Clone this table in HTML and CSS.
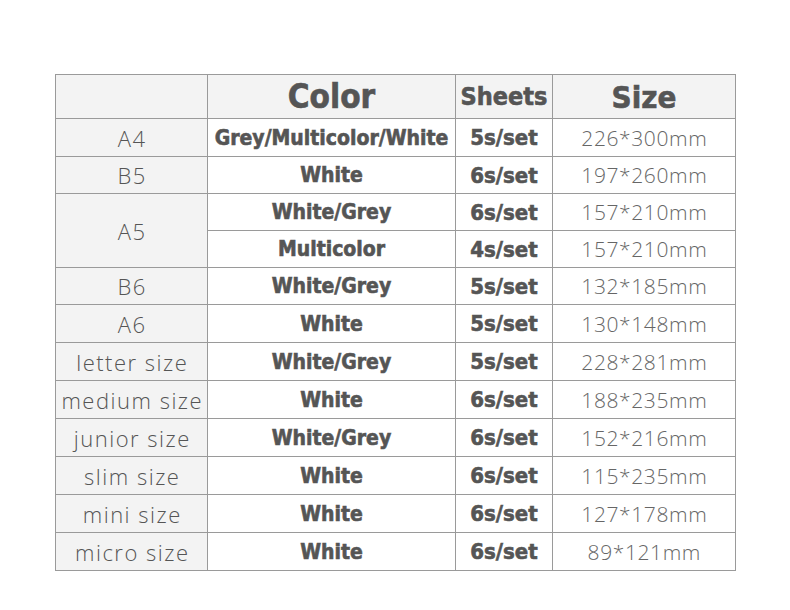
FILE: index.html
```html
<!DOCTYPE html>
<html>
<head>
<meta charset="utf-8">
<link rel="stylesheet" href="styles.css">
</head>
<body>
<div class="wrap">
<table class="spec">
  <colgroup>
    <col class="c1"><col class="c2"><col class="c3"><col class="c4">
  </colgroup>
  <thead>
    <tr class="head">
      <th class="name"></th>
      <th class="h-color">Color</th>
      <th class="h-sheets">Sheets</th>
      <th class="h-size">Size</th>
    </tr>
  </thead>
  <tbody>
    <tr class="r38"><td class="name">A4</td><td class="col">Grey/Multicolor/White</td><td class="sh">5s/set</td><td class="sz">226*300mm</td></tr>
    <tr class="r37"><td class="name">B5</td><td class="col">White</td><td class="sh">6s/set</td><td class="sz">197*260mm</td></tr>
    <tr class="r37"><td class="name" rowspan="2">A5</td><td class="col">White/Grey</td><td class="sh">6s/set</td><td class="sz">157*210mm</td></tr>
    <tr class="r37"><td class="col">Multicolor</td><td class="sh">4s/set</td><td class="sz">157*210mm</td></tr>
    <tr class="r37"><td class="name">B6</td><td class="col">White/Grey</td><td class="sh">5s/set</td><td class="sz">132*185mm</td></tr>
    <tr class="r38"><td class="name">A6</td><td class="col">White</td><td class="sh">5s/set</td><td class="sz">130*148mm</td></tr>
    <tr class="r38"><td class="name">letter size</td><td class="col">White/Grey</td><td class="sh">5s/set</td><td class="sz">228*281mm</td></tr>
    <tr class="r38"><td class="name">medium size</td><td class="col">White</td><td class="sh">6s/set</td><td class="sz">188*235mm</td></tr>
    <tr class="r38"><td class="name">junior size</td><td class="col">White/Grey</td><td class="sh">6s/set</td><td class="sz">152*216mm</td></tr>
    <tr class="r38"><td class="name">slim size</td><td class="col">White</td><td class="sh">6s/set</td><td class="sz">115*235mm</td></tr>
    <tr class="r38"><td class="name">mini size</td><td class="col">White</td><td class="sh">6s/set</td><td class="sz">127*178mm</td></tr>
    <tr class="r38"><td class="name">micro size</td><td class="col">White</td><td class="sh">6s/set</td><td class="sz">89*121mm</td></tr>
  </tbody>
</table>
</div>
</body>
</html>
```
FILE: styles.css
```css
html, body {
  margin: 0;
  padding: 0;
  background: #ffffff;
}
.wrap {
  padding: 74px 0 0 55px;
}
.spec {
  border-collapse: collapse;
  table-layout: fixed;
  width: 681px;
}
.c1 { width: 152px; }
.c2 { width: 248px; }
.c3 { width: 97px; }
.c4 { width: 183px; }
.spec th, .spec td {
  border: 1px solid #9a9a9a;
  padding: 0;
  text-align: center;
  vertical-align: middle;
  white-space: nowrap;
  overflow: hidden;
}
.head { height: 44px; }
.head th { background: #f3f3f3; }
.r38 { height: 38px; }
.r37 { height: 37px; }
.name {
  background: #f3f3f3;
  font-family: "Open Sans", sans-serif;
  font-weight: 300;
  font-size: 22px;
  letter-spacing: 1.5px;
  text-indent: 1.5px;
  color: #555555;
}
.sz {
  font-family: "Open Sans", sans-serif;
  font-weight: 300;
  font-size: 21px;
  letter-spacing: 0.6px;
  text-indent: 0.6px;
  color: #666666;
}
.col, .sh, .h-color, .h-sheets, .h-size {
  font-family: "DejaVu Sans", sans-serif;
  font-stretch: condensed;
  font-weight: 700;
  color: #555555;
  -webkit-text-stroke: 0.6px #555555;
}
.col { font-size: 21px; }
.sh { font-size: 22px; }
.h-color { font-size: 33px; }
.h-sheets { font-size: 25px; }
.h-size { font-size: 31px; }
```
